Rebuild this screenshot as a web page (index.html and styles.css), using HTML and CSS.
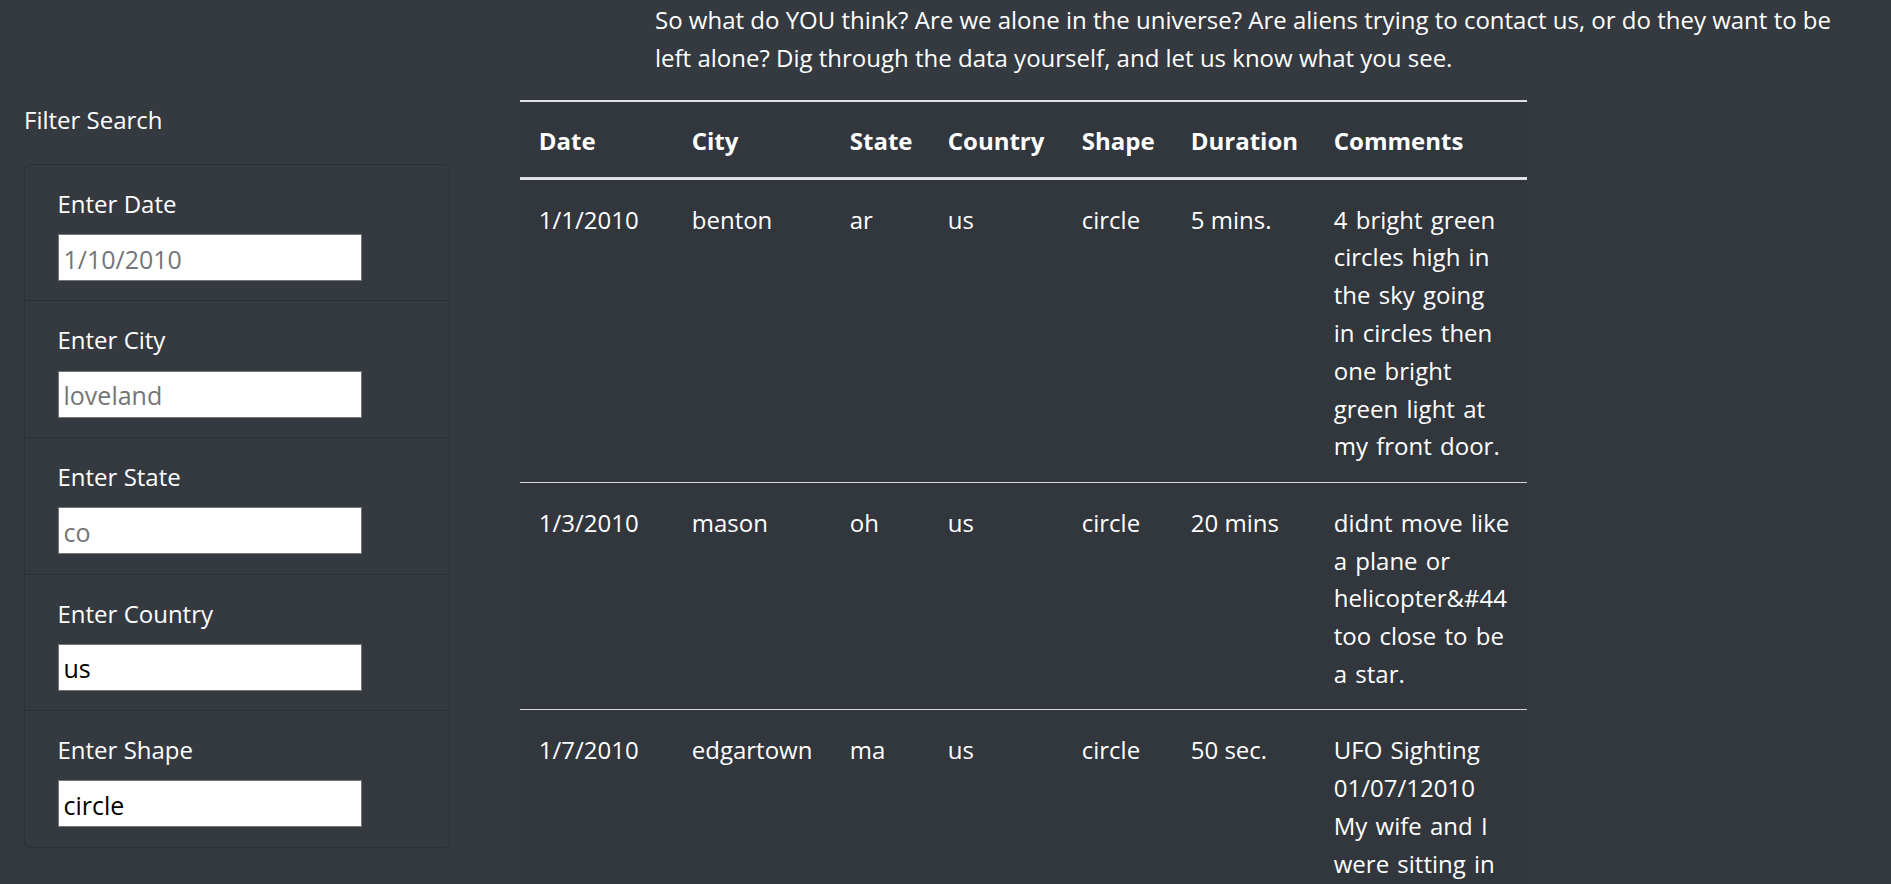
FILE: index.html
```html
<!DOCTYPE html>
<html lang="en">
<head>
<meta charset="utf-8">
<title>UFO Sightings</title>
<link rel="stylesheet" href="styles.css">
</head>
<body>
<div class="page">
  <aside class="sidebar">
    <div class="filter-title">Filter Search</div>
    <ul class="filters">
      <li class="filter-item">
        <label class="filter-label" for="datetime">Enter Date</label>
        <input class="filter-input" id="datetime" type="text" placeholder="1/10/2010">
      </li>
      <li class="filter-item">
        <label class="filter-label" for="city">Enter City</label>
        <input class="filter-input" id="city" type="text" placeholder="loveland">
      </li>
      <li class="filter-item">
        <label class="filter-label" for="state">Enter State</label>
        <input class="filter-input" id="state" type="text" placeholder="co">
      </li>
      <li class="filter-item">
        <label class="filter-label" for="country">Enter Country</label>
        <input class="filter-input" id="country" type="text" value="us">
      </li>
      <li class="filter-item">
        <label class="filter-label" for="shape">Enter Shape</label>
        <input class="filter-input" id="shape" type="text" value="circle">
      </li>
    </ul>
  </aside>
  <main class="content">
    <p class="intro">So what do YOU think? Are we alone in the universe? Are aliens trying to contact us, or do they want to be left alone? Dig through the data yourself, and let us know what you see.</p>
    <table class="ufo-table">
      <colgroup>
        <col class="col-date">
        <col class="col-city">
        <col class="col-state">
        <col class="col-country">
        <col class="col-shape">
        <col class="col-duration">
        <col class="col-comments">
      </colgroup>
      <thead>
        <tr>
          <th>Date</th>
          <th>City</th>
          <th>State</th>
          <th>Country</th>
          <th>Shape</th>
          <th>Duration</th>
          <th>Comments</th>
        </tr>
      </thead>
      <tbody>
        <tr>
          <td>1/1/2010</td>
          <td>benton</td>
          <td>ar</td>
          <td>us</td>
          <td>circle</td>
          <td>5 mins.</td>
          <td class="comments">4 bright green circles high in the sky going in circles then one bright green light at my front door.</td>
        </tr>
        <tr>
          <td>1/3/2010</td>
          <td>mason</td>
          <td>oh</td>
          <td>us</td>
          <td>circle</td>
          <td>20 mins</td>
          <td class="comments">didnt move like a plane or helicopter&amp;#44 too close to be a star.</td>
        </tr>
        <tr>
          <td>1/7/2010</td>
          <td>edgartown</td>
          <td>ma</td>
          <td>us</td>
          <td>circle</td>
          <td>50 sec.</td>
          <td class="comments">UFO Sighting 01/07/12010 My wife and I were sitting in our living room watching the sky when we saw a bright circle.</td>
        </tr>
      </tbody>
    </table>
  </main>
</div>
</body>
</html>
```

FILE: styles.css
```css
html, body {
  margin: 0;
  padding: 0;
}

body {
  background: #343a40;
  color: #ffffff;
  font-family: "Open Sans", "Noto Sans", sans-serif;
  font-size: 24px;
  line-height: 37.8px;
}

.page {
  display: flex;
  align-items: flex-start;
}

.sidebar {
  width: 473px;
  flex: 0 0 473px;
  box-sizing: border-box;
  padding: 0 23px 0 24px;
}

.filter-title {
  margin-top: 101px;
  margin-bottom: 25px;
}

.filters {
  list-style: none;
  margin: 0;
  padding: 0;
  border: 1px solid rgba(0, 0, 0, 0.14);
  border-radius: 6px;
}

.filter-item {
  padding: 20px 31px 19.3px 32.5px;
  border-top: 1px solid rgba(0, 0, 0, 0.14);
}

.filter-item:first-child {
  border-top: none;
}

.filter-label {
  display: block;
  margin-bottom: 11.5px;
}

.filter-input {
  display: block;
  box-sizing: border-box;
  width: 304px;
  height: 47px;
  margin: 0;
  padding: 2px 5px 0;
  border: 1px solid #767676;
  border-radius: 0;
  background: #ffffff;
  color: #000000;
  font-family: "Open Sans", "Noto Sans", sans-serif;
  font-size: 25px;
}

.filter-input::placeholder {
  color: #757575;
  opacity: 1;
}

.content {
  flex: 1 1 auto;
  min-width: 0;
}

.intro {
  margin: 1px 24px 23px 182px;
}

.ufo-table {
  margin-left: 47px;
  width: 1007px;
  table-layout: fixed;
  border-collapse: collapse;
  background: #32363d;
  color: #ffffff;
}

.col-date { width: 153px; }
.col-city { width: 158px; }
.col-state { width: 98px; }
.col-country { width: 134px; }
.col-shape { width: 109px; }
.col-duration { width: 143px; }
.col-comments { width: 212px; }

.ufo-table th,
.ufo-table td {
  padding: 20.75px 18.75px 16.75px;
  text-align: left;
  vertical-align: top;
}

.ufo-table th {
  font-weight: 700;
  border-top: 2px solid #dee2e6;
  border-bottom: 3px solid #dee2e6;
}

.ufo-table td {
  border-top: 1px solid #d6d8db;
}

.ufo-table .comments {
  padding-right: 15.5px;
  word-spacing: 2px;
}
```
